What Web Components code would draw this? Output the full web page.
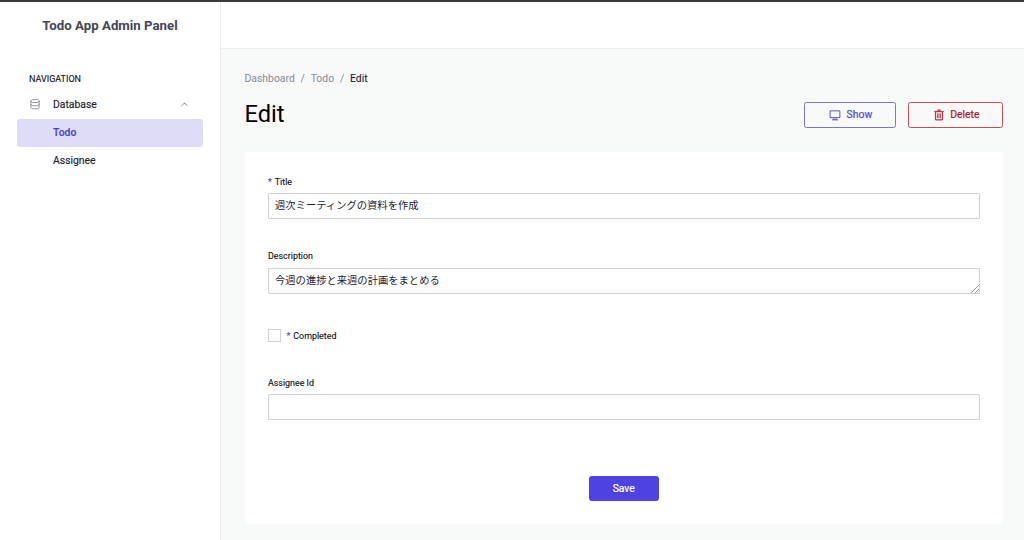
<!DOCTYPE html>
<html lang="en">
<head>
<meta charset="utf-8">
<title>Todo App Admin Panel</title>
<style>
  html, body {
    margin: 0;
    height: 100%;
    overflow: hidden;
  }
  body {
    font-family: Roboto, "Noto Sans CJK JP", sans-serif;
    font-size: 10.4px;
    color: #1c1c38;
  }
</style>
</head>
<body>
<admin-layout>
  <admin-sidebar slot="sidebar" heading="Todo App Admin Panel">
    <nav-group label="Database">
      <nav-link active>Todo</nav-link>
      <nav-link>Assignee</nav-link>
    </nav-group>
  </admin-sidebar>
  <action-header heading="Edit">
    <action-button slot="actions" icon="screen">Show</action-button>
    <action-button slot="actions" icon="trash" variant="danger">Delete</action-button>
  </action-header>
  <edit-form>
    <form-field label="Title" required value="週次ミーティングの資料を作成"></form-field>
    <form-field label="Description" type="textarea" value="今週の進捗と来週の計画をまとめる"></form-field>
    <form-field label="Completed" type="checkbox" required></form-field>
    <form-field label="Assignee Id"></form-field>
  </edit-form>
</admin-layout>

<script>
const ICONS = {
  database: `<svg viewBox="0 0 32 32" fill="none" stroke="currentColor" stroke-width="2.1">
    <path d="M5 8c0-2.500 2-4 5-4h12c3 0 5 1.500 5 4s-2 4-5 4H10c-3 0-5-1.500-5-4zM5 8v16c0 3 2 4.500 5 4.500h12c3 0 5-1.500 5-4.500V8M5 16c0 3 2 4.500 5 4.500h12c3 0 5-1.500 5-4.500"/>
  </svg>`,
  chevron: `<svg viewBox="0 0 32 32" fill="currentColor"><path d="M16 10 26 20 24.600 21.400 16 12.800 7.400 21.400 6 20z"/></svg>`,
  screen: `<svg viewBox="0 0 32 32" fill="currentColor">
    <path d="M28 4H4a2 2 0 0 0-2 2v16a2 2 0 0 0 2 2h8v4H8v2h16v-2h-4v-4h8a2 2 0 0 0 2-2V6a2 2 0 0 0-2-2zM18 28h-4v-4h4zM28 22H4V6h24z" stroke="currentColor" stroke-width=".4"/>
  </svg>`,
  trash: `<svg viewBox="0 0 32 32" fill="currentColor" stroke="currentColor" stroke-width=".8">
    <path d="M12 12h2v12h-2zM18 12h2v12h-2zM4 6v2h2v20a2 2 0 0 0 2 2h16a2 2 0 0 0 2-2V8h2V6zM8 28V8h16v20zM12 2h8v2h-8z"/>
  </svg>`,
};

class AdminLayout extends HTMLElement {
  connectedCallback() {
    this.attachShadow({ mode: 'open' });
    this.shadowRoot.innerHTML = `
      <style>
        :host {
          display: grid;
          grid-template-columns: 221px 1fr;
          height: 100vh;
          box-sizing: border-box;
          border-top: 2px solid #3b393d;
          background: #f8f9f9;
        }
        .page {
          display: flex;
          flex-direction: column;
          min-width: 0;
        }
        header {
          height: 46px;
          flex: none;
          background: #fff;
          border-bottom: 1px solid #ebecee;
        }
        main {
          padding: 22px 21px 0 23.500px;
        }
      </style>
      <slot name="sidebar"></slot>
      <div class="page">
        <header></header>
        <main><slot></slot></main>
      </div>
    `;
  }
}

class AdminSidebar extends HTMLElement {
  connectedCallback() {
    this.attachShadow({ mode: 'open' });
    this.shadowRoot.innerHTML = `
      <style>
        :host {
          display: block;
          box-sizing: border-box;
          padding: 14px 17px 0;
          background: #fff;
          border-right: 1px solid #ebecee;
        }
        .logo {
          font-size: 13.250px;
          line-height: 20px;
          font-weight: 700;
          text-align: center;
          color: #454655;
        }
        h2 {
          margin: 35px 0 8px 12px;
          font-size: 9px;
          line-height: 16px;
          font-weight: 400;
          color: #0c0c14;
          -webkit-text-stroke: .1px;
        }
      </style>
      <div class="logo">${this.getAttribute('heading')}</div>
      <h2>NAVIGATION</h2>
      <slot></slot>
    `;
  }
}

class NavGroup extends HTMLElement {
  connectedCallback() {
    this.attachShadow({ mode: 'open' });
    this.shadowRoot.innerHTML = `
      <style>
        :host {
          display: block;
        }
        .row {
          display: flex;
          align-items: center;
          height: 18px;
          margin-bottom: 6px;
          padding: 0 13px 0 12px;
        }
        .label {
          flex: 1;
          margin-left: 12px;
          -webkit-text-stroke: .15px;
        }
        svg {
          display: block;
          width: 12px;
          height: 12px;
          color: #777986;
        }
        .chevron svg {
          width: 11px;
          height: 11px;
        }
      </style>
      <div class="row">
        ${ICONS.database}
        <span class="label">${this.getAttribute('label')}</span>
        <span class="chevron">${ICONS.chevron}</span>
      </div>
      <slot></slot>
    `;
  }
}

class NavLink extends HTMLElement {
  connectedCallback() {
    this.attachShadow({ mode: 'open' });
    this.shadowRoot.innerHTML = `
      <style>
        :host {
          display: block;
          height: 28px;
          line-height: 27px;
          padding-left: 36px;
          border-radius: 3px;
          -webkit-text-stroke: .15px;
        }
        :host([active]) {
          background: #dfdcf8;
          color: #4d40cf;
          font-weight: 500;
        }
      </style>
      <slot></slot>
    `;
  }
}

class ActionHeader extends HTMLElement {
  connectedCallback() {
    this.attachShadow({ mode: 'open' });
    this.shadowRoot.innerHTML = `
      <style>
        :host {
          display: block;
        }
        .breadcrumbs {
          display: flex;
          gap: 5.800px;
          line-height: 16px;
          color: #898a9a;
        }
        .breadcrumbs .current {
          color: #1c1c38;
          -webkit-text-stroke: .1px;
        }
        .bar {
          display: flex;
          align-items: center;
          justify-content: space-between;
          height: 30px;
          margin-top: 13px;
        }
        h1 {
          margin: 0;
          padding-bottom: 2px;
          font-size: 23.700px;
          font-weight: 400;
          line-height: 30px;
          color: #000;
        }
        .actions {
          display: flex;
          gap: 12px;
        }
      </style>
      <div class="breadcrumbs">
        <span>Dashboard</span><span>/</span><span>Todo</span><span>/</span><span class="current">Edit</span>
      </div>
      <div class="bar">
        <h1>${this.getAttribute('heading')}</h1>
        <div class="actions"><slot name="actions"></slot></div>
      </div>
    `;
  }
}

class ActionButton extends HTMLElement {
  connectedCallback() {
    const icon = ICONS[this.getAttribute('icon')] || '';
    this.attachShadow({ mode: 'open' });
    this.shadowRoot.innerHTML = `
      <style>
        :host {
          display: block;
          color: #5146d2;
          --edge: #7b73dc;
        }
        :host([variant="danger"]) {
          color: #b90f20;
          --edge: #cb4b57;
        }
        button {
          display: flex;
          align-items: center;
          gap: 5.500px;
          box-sizing: border-box;
          height: 26px;
          padding: 0 23px 1px 24px;
          font: 400 10.400px Roboto, sans-serif;
          -webkit-text-stroke: .2px;
          color: inherit;
          background: transparent;
          border: 1px solid var(--edge);
          border-radius: 2.500px;
        }
        :host([variant="danger"]) button {
          padding: 0 22.500px 1px 23.500px;
        }
        :host([variant="primary"]) button {
          height: 25px;
          padding: 0 23px;
          color: #fff;
          background: #4e43e1;
          border-color: #4e43e1;
        }
        svg {
          display: block;
          width: 12px;
          height: 12px;
        }
      </style>
      <button type="button">${icon}<slot></slot></button>
    `;
  }
}

class EditForm extends HTMLElement {
  connectedCallback() {
    this.attachShadow({ mode: 'open' });
    this.shadowRoot.innerHTML = `
      <style>
        :host {
          display: block;
          box-sizing: border-box;
          height: 372px;
          margin-top: 22px;
          padding: 24px 23.500px 0;
          background: #fff;
        }
        .footer {
          display: flex;
          justify-content: center;
          margin-top: 56px;
        }
      </style>
      <slot></slot>
      <div class="footer"><action-button variant="primary">Save</action-button></div>
    `;
  }
}

class FormField extends HTMLElement {
  connectedCallback() {
    const type = this.getAttribute('type') || 'text';
    const value = this.getAttribute('value') || '';
    const star = this.hasAttribute('required') ? '<span class="star">*</span>' : '';
    const label = `<label for="control">${star}${this.getAttribute('label')}</label>`;
    const controls = {
      text: `${label}<input id="control" type="text" value="${value}">`,
      textarea: `${label}<textarea id="control" rows="1">${value}</textarea>`,
      checkbox: `<div class="check"><input id="control" type="checkbox">${label}</div>`,
    };
    this.attachShadow({ mode: 'open' });
    this.shadowRoot.innerHTML = `
      <style>
        :host {
          display: block;
          margin-bottom: 31px;
        }
        label {
          display: block;
          height: 12px;
          margin-bottom: 5px;
          font-size: 8.900px;
          line-height: 12px;
          color: #0c0c14;
          -webkit-text-stroke: .1px;
        }
        .star {
          margin-right: 3px;
          color: #4e43e1;
        }
        input[type="text"],
        textarea {
          display: block;
          box-sizing: border-box;
          width: 100%;
          height: 26px;
          margin: 0;
          padding: 0 6px 3px;
          font: 10.300px/16px Roboto, "Noto Sans CJK JP", sans-serif;
          color: #1c1c38;
          background: #fff;
          border: 1px solid #d0d1d6;
          border-radius: 1px;
          outline: none;
        }
        textarea {
          margin-top: 6px;
          padding-top: 4px;
          resize: vertical;
          overflow: hidden;
        }
        textarea::-webkit-resizer {
          background: linear-gradient(135deg, transparent 72%, #999 72% 76%, transparent 76% 85%, #999 85% 89%, transparent 89%);
        }
        .check {
          display: flex;
          align-items: center;
          gap: 5.500px;
          height: 21px;
        }
        .check label {
          margin: 0;
        }
        input[type="checkbox"] {
          appearance: none;
          box-sizing: border-box;
          width: 13px;
          height: 13px;
          margin: 0;
          border: 1px solid #d0d1d6;
          background: #fff;
        }
      </style>
      ${controls[type]}
    `;
  }
}

customElements.define('admin-layout', AdminLayout);
customElements.define('admin-sidebar', AdminSidebar);
customElements.define('nav-group', NavGroup);
customElements.define('nav-link', NavLink);
customElements.define('action-header', ActionHeader);
customElements.define('action-button', ActionButton);
customElements.define('edit-form', EditForm);
customElements.define('form-field', FormField);
</script>
</body>
</html>
